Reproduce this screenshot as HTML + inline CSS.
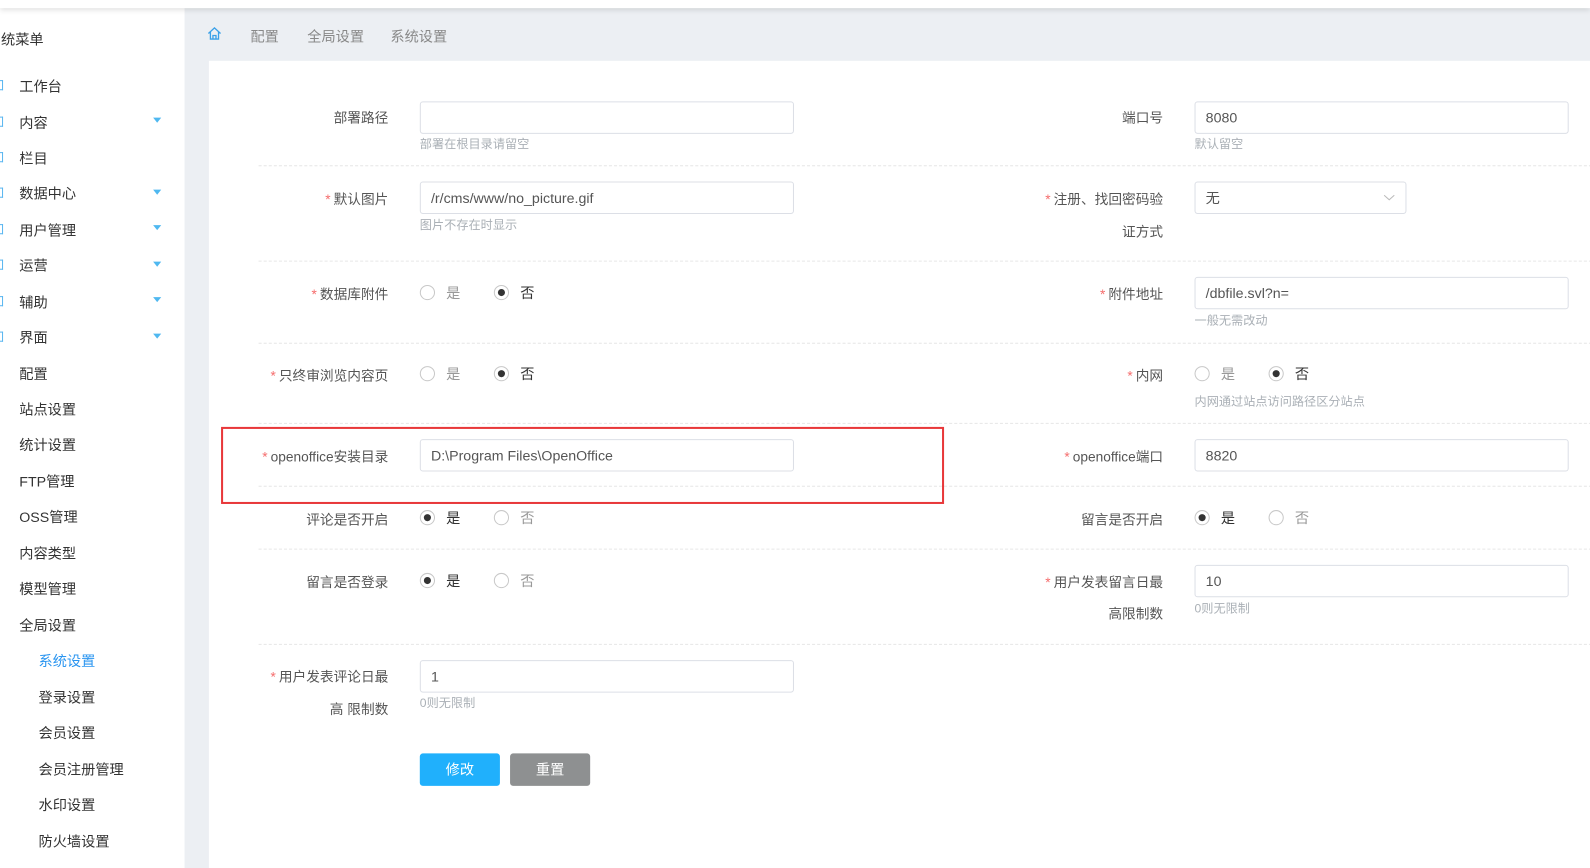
<!DOCTYPE html>
<html><head><meta charset="utf-8"><style>
*{margin:0;padding:0;box-sizing:border-box}
body{width:1590px;height:856px;overflow:hidden;background:#fff;font-family:"Liberation Sans","Noto Sans CJK SC",sans-serif;position:relative;color:#333}
#w{position:absolute;left:0;top:0;width:1568px;height:845px;transform:scale(1.01403);transform-origin:0 0}
.a{position:absolute;white-space:nowrap}
#top{position:absolute;left:0;top:0;width:1568px;height:8px;background:#fff;box-shadow:0 2px 5px rgba(0,0,0,.12);z-index:5}
#gray{position:absolute;left:182px;top:8px;width:1400px;height:848px;background:#eceff3}
#card{position:absolute;left:206px;top:60px;width:1380px;height:796px;background:#fff}
.side{font-size:14px;color:#333;line-height:14px;margin-top:1px}
.ic{position:absolute;left:0;width:3px;height:10px;border:1px solid #5ab6f0;border-left:none}
.arr{position:absolute;left:151px;width:0;height:0;border-left:4px solid transparent;border-right:4px solid transparent;border-top:5px solid #4fb8f0}
.lbl{font-size:13.5px;color:#555;text-align:right;line-height:14px;margin-top:2px}
.lbl b{color:#f56c6c;font-weight:normal;margin-right:3px}
.inp{position:absolute;height:32px;border:1px solid #dcdfe6;border-radius:3px;font-size:14px;color:#555;padding-left:10px;line-height:30px;background:#fff}
.hint{font-size:12px;color:#aab0b6;line-height:12px}
.sep{position:absolute;left:255px;width:1335px;border-top:1px dashed #e6e6e6;height:0}
.rd{position:absolute;width:15px;height:15px;border:1px solid #c8c8c8;border-radius:50%;background:#fff}
.rd.on::after{content:"";position:absolute;left:3px;top:3px;width:7px;height:7px;border-radius:50%;background:#333}
.rt{font-size:14px;line-height:14px}
</style></head><body><div id="w">
<div id="gray"></div>
<div id="card"></div>
<div id="top"></div>

<svg class="a" style="left:204px;top:26px" width="15" height="14" viewBox="0 0 15 14"><path d="M1.5 7 L7.5 1.5 L13.5 7 M3.5 5.5 V12.5 H11.5 V5.5 M6 12.5 V9 H9 V12.5" fill="none" stroke="#3aa0e8" stroke-width="1.3"/></svg>
<div class="a" style="left:247px;top:26px;font-size:14px;color:#888">配置</div>
<div class="a" style="left:303px;top:26px;font-size:14px;color:#888">全局设置</div>
<div class="a" style="left:385px;top:26px;font-size:14px;color:#888">系统设置</div>

<div class="a side" style="left:1px;top:31px">统菜单</div>
<div class="ic" style="top:79px"></div><div class="a side" style="left:19px;top:77px">工作台</div>
<div class="ic" style="top:115px"></div><div class="a side" style="left:19px;top:113px">内容</div><div class="arr" style="top:116px"></div>
<div class="ic" style="top:150px"></div><div class="a side" style="left:19px;top:148px">栏目</div>
<div class="ic" style="top:185px"></div><div class="a side" style="left:19px;top:183px">数据中心</div><div class="arr" style="top:187px"></div>
<div class="ic" style="top:221px"></div><div class="a side" style="left:19px;top:219px">用户管理</div><div class="arr" style="top:222px"></div>
<div class="ic" style="top:256px"></div><div class="a side" style="left:19px;top:254px">运营</div><div class="arr" style="top:258px"></div>
<div class="ic" style="top:292px"></div><div class="a side" style="left:19px;top:290px">辅助</div><div class="arr" style="top:293px"></div>
<div class="ic" style="top:327px"></div><div class="a side" style="left:19px;top:325px">界面</div><div class="arr" style="top:329px"></div>
<div class="a side" style="left:19px;top:361px">配置</div>
<div class="a side" style="left:19px;top:396px">站点设置</div>
<div class="a side" style="left:19px;top:431px">统计设置</div>
<div class="a side" style="left:19px;top:467px">FTP管理</div>
<div class="a side" style="left:19px;top:502px">OSS管理</div>
<div class="a side" style="left:19px;top:538px">内容类型</div>
<div class="a side" style="left:19px;top:573px">模型管理</div>
<div class="a side" style="left:19px;top:609px">全局设置</div>
<div class="a side" style="left:38px;top:644px;color:#2a95f0">系统设置</div>
<div class="a side" style="left:38px;top:680px">登录设置</div>
<div class="a side" style="left:38px;top:715px">会员设置</div>
<div class="a side" style="left:38px;top:751px">会员注册管理</div>
<div class="a side" style="left:38px;top:786px">水印设置</div>
<div class="a side" style="left:38px;top:822px">防火墙设置</div>

<div class="sep" style="top:163px"></div>
<div class="sep" style="top:257px"></div>
<div class="sep" style="top:338px"></div>
<div class="sep" style="top:417px"></div>
<div class="sep" style="top:479px"></div>
<div class="sep" style="top:541px"></div>
<div class="sep" style="top:635px"></div>

<div class="a lbl" style="right:1185px;top:108px">部署路径</div>
<div class="inp" style="left:414px;top:100px;width:369px"></div>
<div class="a hint" style="left:414px;top:136px">部署在根目录请留空</div>
<div class="a lbl" style="right:421px;top:108px">端口号</div>
<div class="inp" style="left:1178px;top:100px;width:369px">8080</div>
<div class="a hint" style="left:1178px;top:136px">默认留空</div>

<div class="a lbl" style="right:1185px;top:188px"><b>*</b>默认图片</div>
<div class="inp" style="left:414px;top:179px;width:369px">/r/cms/www/no_picture.gif</div>
<div class="a hint" style="left:414px;top:216px">图片不存在时显示</div>
<div class="a lbl" style="right:421px;top:188px"><b>*</b>注册、找回密码验</div>
<div class="a lbl" style="right:421px;top:220px">证方式</div>
<div class="inp" style="left:1178px;top:179px;width:209px">无</div>
<svg class="a" style="left:1364px;top:191px" width="12" height="8" viewBox="0 0 12 8"><path d="M1 1.5 L6 6 L11 1.5" fill="none" stroke="#bbb" stroke-width="1"/></svg>

<div class="a lbl" style="right:1185px;top:282px"><b>*</b>数据库附件</div>
<div class="rd" style="left:414px;top:281px"></div><div class="a rt" style="left:440px;top:282px;color:#999">是</div>
<div class="rd on" style="left:487px;top:281px"></div><div class="a rt" style="left:513px;top:282px">否</div>
<div class="a lbl" style="right:421px;top:282px"><b>*</b>附件地址</div>
<div class="inp" style="left:1178px;top:273px;width:369px">/dbfile.svl?n=</div>
<div class="a hint" style="left:1178px;top:310px">一般无需改动</div>

<div class="a lbl" style="right:1185px;top:362px"><b>*</b>只终审浏览内容页</div>
<div class="rd" style="left:414px;top:361px"></div><div class="a rt" style="left:440px;top:362px;color:#999">是</div>
<div class="rd on" style="left:487px;top:361px"></div><div class="a rt" style="left:513px;top:362px">否</div>
<div class="a lbl" style="right:421px;top:362px"><b>*</b>内网</div>
<div class="rd" style="left:1178px;top:361px"></div><div class="a rt" style="left:1204px;top:362px;color:#999">是</div>
<div class="rd on" style="left:1251px;top:361px"></div><div class="a rt" style="left:1277px;top:362px">否</div>
<div class="a hint" style="left:1178px;top:390px">内网通过站点访问路径区分站点</div>

<div class="a lbl" style="right:1185px;top:442px"><b>*</b>openoffice安装目录</div>
<div class="inp" style="left:414px;top:433px;width:369px">D:\Program Files\OpenOffice</div>
<div class="a lbl" style="right:421px;top:442px"><b>*</b>openoffice端口</div>
<div class="inp" style="left:1178px;top:433px;width:369px">8820</div>
<div class="a" style="left:218px;top:421px;width:713px;height:76px;border:2px solid #e8383a"></div>

<div class="a lbl" style="right:1185px;top:504px">评论是否开启</div>
<div class="rd on" style="left:414px;top:503px"></div><div class="a rt" style="left:440px;top:504px">是</div>
<div class="rd" style="left:487px;top:503px"></div><div class="a rt" style="left:513px;top:504px;color:#999">否</div>
<div class="a lbl" style="right:421px;top:504px">留言是否开启</div>
<div class="rd on" style="left:1178px;top:503px"></div><div class="a rt" style="left:1204px;top:504px">是</div>
<div class="rd" style="left:1251px;top:503px"></div><div class="a rt" style="left:1277px;top:504px;color:#999">否</div>

<div class="a lbl" style="right:1185px;top:566px">留言是否登录</div>
<div class="rd on" style="left:414px;top:565px"></div><div class="a rt" style="left:440px;top:566px">是</div>
<div class="rd" style="left:487px;top:565px"></div><div class="a rt" style="left:513px;top:566px;color:#999">否</div>
<div class="a lbl" style="right:421px;top:566px"><b>*</b>用户发表留言日最</div>
<div class="a lbl" style="right:421px;top:597px">高限制数</div>
<div class="inp" style="left:1178px;top:557px;width:369px">10</div>
<div class="a hint" style="left:1178px;top:594px">0则无限制</div>

<div class="a lbl" style="right:1185px;top:659px"><b>*</b>用户发表评论日最</div>
<div class="a lbl" style="right:1185px;top:691px">高 限制数</div>
<div class="inp" style="left:414px;top:651px;width:369px">1</div>
<div class="a hint" style="left:414px;top:687px">0则无限制</div>

<div class="a" style="left:414px;top:743px;width:79px;height:32px;background:#20b0fc;border-radius:3px;color:#fff;font-size:14px;text-align:center;line-height:32px">修改</div>
<div class="a" style="left:503px;top:743px;width:79px;height:32px;background:#8e9091;border-radius:3px;color:#fff;font-size:14px;text-align:center;line-height:32px">重置</div>
</div></body></html>
